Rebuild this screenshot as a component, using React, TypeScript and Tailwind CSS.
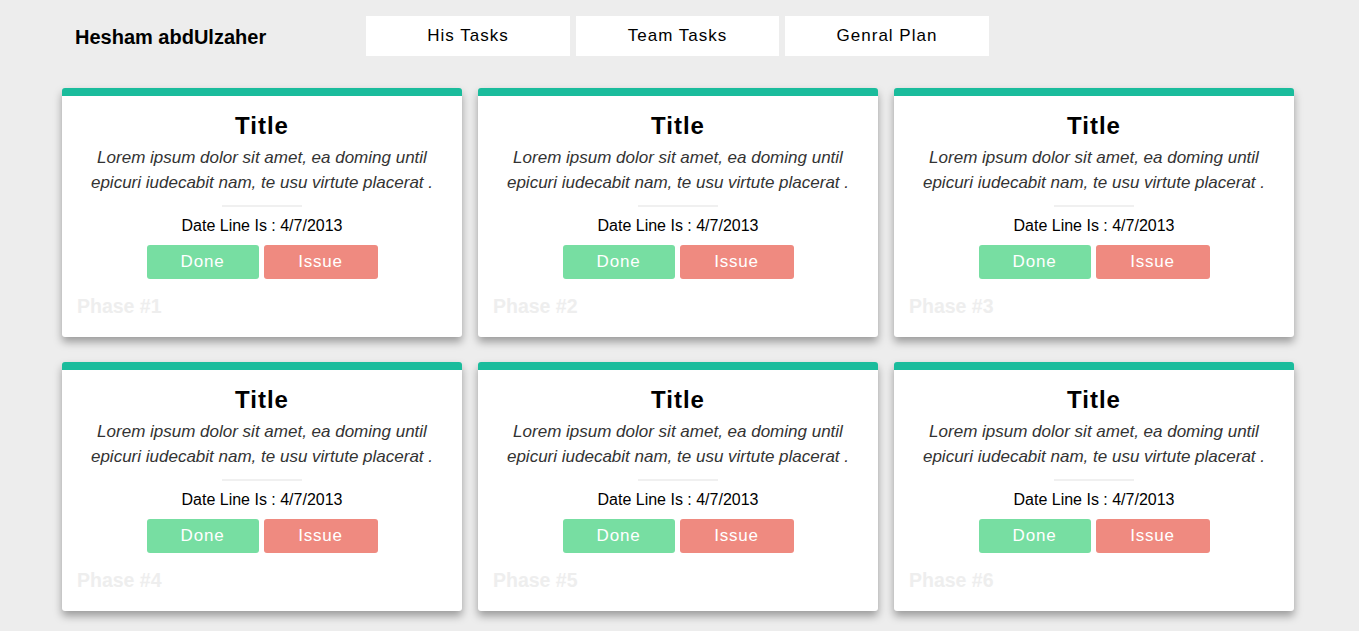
import React from "react";

const phases = [1, 2, 3, 4, 5, 6];

function TaskCard({ phase }: { phase: number }) {
  return (
    <div className="bg-white rounded-[3px] border-t-8 border-[#1abc9c] shadow-[0_5px_8px_rgba(0,0,0,0.35)] h-[249px] flex flex-col items-center pt-[15px]">
      <h2 className="text-[24px] font-bold tracking-[1px] leading-[30px] text-black">Title</h2>
      <p className="italic text-[17px] leading-[25px] text-[#333] text-center w-[370px] mt-[4px]">
        Lorem ipsum dolor sit amet, ea doming until epicuri iudecabit nam, te usu virtute placerat .
      </p>
      <div className="w-[80px] h-[2px] bg-[#f0f0f0] mt-[10px]" />
      <div className="text-[16px] leading-[20px] text-black mt-[9px]">Date Line Is : 4/7/2013</div>
      <div className="flex gap-[5px] mt-[9px]">
        <button className="w-[112px] h-[34px] rounded-[3px] bg-[#77dea2] text-white text-[17px] tracking-[0.8px]">Done</button>
        <button className="w-[114px] h-[34px] rounded-[3px] bg-[#ef8a80] text-white text-[17px] tracking-[0.8px]">Issue</button>
      </div>
      <div className="self-start pl-[15px] mt-[13px] text-[19.5px] font-bold text-[#eeeeee]">Phase #{phase}</div>
    </div>
  );
}

export default function App() {
  return (
    <div className="min-h-screen bg-[#ededed] font-['Liberation_Sans',Arial,sans-serif] pt-[16px] pb-[20px]">
      <header className="flex items-center ml-[75px]">
        <div className="text-[20px] font-bold text-black w-[291px] pt-[2px]">Hesham abdUlzaher</div>
        <nav className="flex gap-[6px]">
          <button className="w-[204px] h-[40px] bg-white text-[17px] tracking-[1px] text-black">His Tasks</button>
          <button className="w-[203px] h-[40px] bg-white text-[17px] tracking-[1px] text-black">Team Tasks</button>
          <button className="w-[204px] h-[40px] bg-white text-[17px] tracking-[1px] text-black">Genral Plan</button>
        </nav>
      </header>
      <main className="ml-[62px] w-[1232px] grid grid-cols-3 gap-x-4 gap-y-[25px] mt-[32px]">
        {phases.map((p) => (
          <TaskCard key={p} phase={p} />
        ))}
      </main>
    </div>
  );
}
